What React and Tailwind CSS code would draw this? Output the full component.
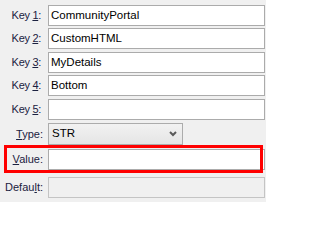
const keys = [
  { n: '1', v: 'CommunityPortal' },
  { n: '2', v: 'CustomHTML' },
  { n: '3', v: 'MyDetails' },
  { n: '4', v: 'Bottom' },
  { n: '5', v: '' },
]

const gaps = ['mt-[5px]', 'mt-[2px]', 'mt-[3px]', 'mt-[2px]', 'mt-[3px]']

function Field({ children, className = '' }) {
  return (
    <div className={`h-[21px] flex-1 border border-[#ababab] bg-white pl-[2px] flex items-center text-black text-[11.5px] ${className}`}>
      {children}
    </div>
  )
}

export default function App() {
  return (
    <div
      className="relative w-[266px] h-[202px] bg-[#f0f0f0] text-[11px] text-[#1b2140] flex flex-col overflow-hidden"
      style={{ fontFamily: 'Tahoma, "Liberation Sans", Arial, sans-serif' }}
    >
      {keys.map((k, i) => (
        <div key={k.n} className={`flex items-center pr-px ${gaps[i]}`}>
          <div className="w-[41px] text-right shrink-0 tracking-[-0.3px]">
            Key <u>{k.n}</u>:
          </div>
          <div className="w-[7px] shrink-0" />
          <Field>{k.v}</Field>
        </div>
      ))}

      <div className="flex items-center mt-[3px]">
        <div className="w-[43px] text-right shrink-0">
          <u>T</u>ype:
        </div>
        <div className="w-[5px] shrink-0" />
        <div className="h-[22px] w-[135px] border border-[#acacac] bg-gradient-to-b from-[#f2f2f2] to-[#e5e5e5] flex items-center justify-between pl-[3px] pr-[5px] text-black text-[11.5px]">
          <span>STR</span>
          <svg width="8" height="6" viewBox="0 0 8 6">
            <path d="M1 1 L4 4 L7 1" fill="none" stroke="#5a5a5a" strokeWidth="2" />
          </svg>
        </div>
      </div>

      <div className="flex items-center mt-[4px] pr-px">
        <div className="w-[43px] text-right shrink-0">
          <u>V</u>alue:
        </div>
        <div className="w-[5px] shrink-0" />
        <Field />
      </div>

      <div className="flex items-center mt-[7px] pr-px">
        <div className="w-[43px] text-right shrink-0">
          Defau<u>l</u>t:
        </div>
        <div className="w-[5px] shrink-0" />
        <Field className="!bg-[#f0f0f0] !border-[#c4c4c4]" />
      </div>

      <div className="absolute left-[4px] top-[145px] w-[259px] h-[28px] border-[3px] border-[#ff0000]" />
    </div>
  )
}
